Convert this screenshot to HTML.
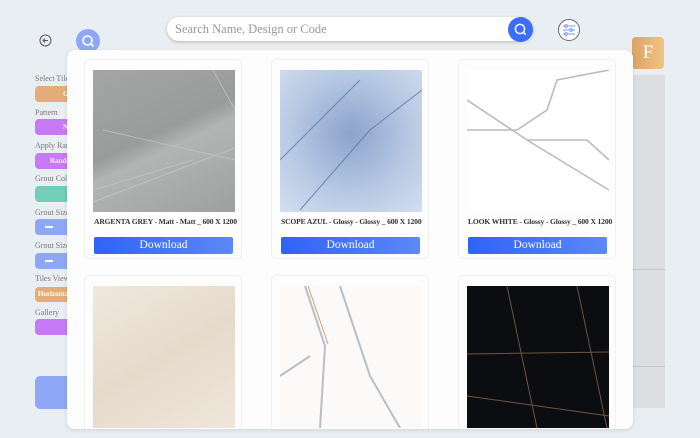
<!DOCTYPE html>
<html><head><meta charset="utf-8"><style>
*{margin:0;padding:0;box-sizing:border-box}
html,body{width:700px;height:438px;overflow:hidden}
body{background:#e8eef2;font-family:"Liberation Serif",serif;position:relative}
.a{position:absolute}
.lbl{position:absolute;left:35px;font-size:8px;color:#777}
.btn{position:absolute;left:35px;width:40px;height:16px;border-radius:4px;color:#fff;font-size:7px;font-weight:bold;padding-left:28px;line-height:16px;overflow:hidden;white-space:nowrap}
.modal{left:67px;top:50px;width:566px;height:379px;background:#fdfdfd;border-radius:8px;box-shadow:0 1px 4px rgba(0,0,0,.12);overflow:hidden}
.card{position:absolute;width:158px;height:200px;border:1px solid #f0f0f0;border-radius:5px;background:#fdfdfd}
.img{position:absolute;left:8px;top:10px;width:142px;height:142px;overflow:hidden}
.t{position:absolute;left:9px;top:157px;font-size:7.6px;color:#333;white-space:nowrap;font-weight:bold;letter-spacing:-.15px}
.dl{position:absolute;left:9px;top:177px;width:139px;height:17px;background:linear-gradient(90deg,#2f63f5,#5d88f8);border-radius:2px;color:#fff;font-size:11.5px;text-align:center;line-height:17px}
</style></head><body>
<svg class="a" style="left:39px;top:34px" width="13" height="13" viewBox="0 0 13 13"><circle cx="6.5" cy="6.5" r="5.5" fill="none" stroke="#555" stroke-width="1"/><path d="M9 6.5H4M6 4.5L4 6.5 6 8.5" fill="none" stroke="#555" stroke-width="1"/></svg>
<div class="a" style="left:76px;top:29px;width:24px;height:24px;border-radius:50%;background:#8fa8f5"></div>
<svg class="a" style="left:80px;top:33px" width="16" height="16" viewBox="0 0 16 16"><circle cx="7.5" cy="7.5" r="4.5" fill="none" stroke="#fff" stroke-width="1.6"/><path d="M11 11l2.5 2.5" stroke="#fff" stroke-width="1.6"/></svg>
<div class="a" style="left:167px;top:17px;width:366px;height:24px;background:#fff;border-radius:12px;box-shadow:0 1px 3px rgba(120,100,60,.4);font-size:12.5px;color:#999;padding-left:8px;line-height:25px">Search Name, Design or Code</div>
<div class="a" style="left:508px;top:17px;width:25px;height:25px;border-radius:50%;background:#3b6ef6"></div>
<svg class="a" style="left:512px;top:21px" width="17" height="17" viewBox="0 0 17 17"><circle cx="8" cy="8" r="4.6" fill="none" stroke="#fff" stroke-width="1.5"/><path d="M11.4 11.4l2.3 2.3" stroke="#fff" stroke-width="1.5"/></svg>
<svg class="a" style="left:557px;top:18px" width="24" height="24" viewBox="0 0 24 24"><circle cx="12" cy="12" r="10.5" fill="#fff" stroke="#666" stroke-width="1"/><g stroke="#7a9af5" stroke-width="1.1"><path d="M6 8h12M6 12h12M6 16h12"/><circle cx="9" cy="8" r="1.3" fill="#fff"/><circle cx="14" cy="12" r="1.3" fill="#fff"/><circle cx="9" cy="16" r="1.3" fill="#fff"/></g></svg>
<div class="a" style="left:632px;top:37px;width:32px;height:32px;border-radius:4px;background:linear-gradient(90deg,#dca266,#f0c480);color:#fff;font-size:19px;text-align:center;line-height:32px">F</div>
<div class="a" style="left:633px;top:75px;width:32px;height:333px;background:#dcdfe1"></div>
<div class="a" style="left:633px;top:269px;width:32px;height:1px;background:#c4c6c8"></div>
<div class="a" style="left:633px;top:366px;width:32px;height:1px;background:#c4c6c8"></div>
<div class="lbl" style="top:74px">Select Tiles</div><div class="btn" style="top:86px;background:#e3ad79">G</div>
<div class="lbl" style="top:108px">Pattern</div><div class="btn" style="top:119px;background:#c879f5">N</div>
<div class="lbl" style="top:141px">Apply Random</div><div class="btn" style="top:153px;background:#c879f5;padding-left:15px">Random</div>
<div class="lbl" style="top:174px">Grout Color</div><div class="btn" style="top:186px;background:#6fcfb8"></div>
<div class="lbl" style="top:208px">Grout Size</div><div class="btn" style="top:219px;background:#8fa8f5;padding-left:0"><span class="a" style="left:10px;top:7px;width:8px;height:2px;background:#fff"></span></div>
<div class="lbl" style="top:241px">Grout Size</div><div class="btn" style="top:253px;background:#8fa8f5;padding-left:0"><span class="a" style="left:10px;top:7px;width:8px;height:2px;background:#fff"></span></div>
<div class="lbl" style="top:274px">Tiles View</div><div class="btn" style="top:287px;height:15px;line-height:15px;background:#e3ad79;padding-left:3px">Horizontal</div>
<div class="lbl" style="top:308px">Gallery</div><div class="btn" style="top:319px;background:#c879f5"></div>
<div class="a" style="left:35px;top:376px;width:40px;height:33px;border-radius:5px;background:#8fa8f5"></div>
<div class="a modal">
 <div class="card" style="left:17px;top:9px"><div class="img" style="background:linear-gradient(155deg,#a4a5a5,#9a9b9b 45%,#b3b4b4 55%,#9e9f9f)"><svg width="142" height="142"><path d="M0 132L142 78M0 120L100 90M10 60L142 90M120 0L142 40" stroke="#c8c8c8" stroke-width="1" fill="none" opacity=".7"/></svg></div><div class="t">ARGENTA GREY - Matt - Matt _ 600 X 1200</div><div class="dl">Download</div></div>
 <div class="card" style="left:204px;top:9px"><div class="img" style="background:radial-gradient(circle at 50% 45%,#8ca3cc,#b6c8e3 55%,#d4dff0)"><svg width="142" height="142"><path d="M0 90L80 10M20 140L90 60 142 20" stroke="#5a76a3" stroke-width="1.2" fill="none" opacity=".7"/></svg></div><div class="t">SCOPE AZUL - Glossy - Glossy _ 600 X 1200</div><div class="dl">Download</div></div>
 <div class="card" style="left:391px;top:9px"><div class="img" style="background:#fff"><svg width="142" height="142"><path d="M0 30L60 70 142 120M0 60L50 60 80 40M80 40L90 10 142 0M60 70L120 70 142 90" stroke="#bbb" stroke-width="1.6" fill="none"/></svg></div><div class="t">LOOK WHITE - Glossy - Glossy _ 600 X 1200</div><div class="dl">Download</div></div>
 <div class="card" style="left:17px;top:225px;height:160px"><div class="img" style="background:linear-gradient(150deg,#f0e8de,#e6dacb 50%,#efe6da)"></div></div>
 <div class="card" style="left:204px;top:225px;height:160px"><div class="img" style="background:#fbfaf8"><svg width="142" height="142"><path d="M25 0L45 60 40 142M60 0L90 90 120 142M0 90L30 70" stroke="#a7afb8" stroke-width="2" fill="none" opacity=".8"/><path d="M28 0L48 58" stroke="#c9a272" stroke-width="1" fill="none"/></svg></div></div>
 <div class="card" style="left:391px;top:225px;height:160px"><div class="img" style="background:#0c0d11"><svg width="142" height="142"><path d="M0 68L142 66M0 110L142 130M110 0L140 142M40 0L70 142" stroke="#6b5640" stroke-width="1" fill="none"/></svg></div></div>
</div>
</body></html>
